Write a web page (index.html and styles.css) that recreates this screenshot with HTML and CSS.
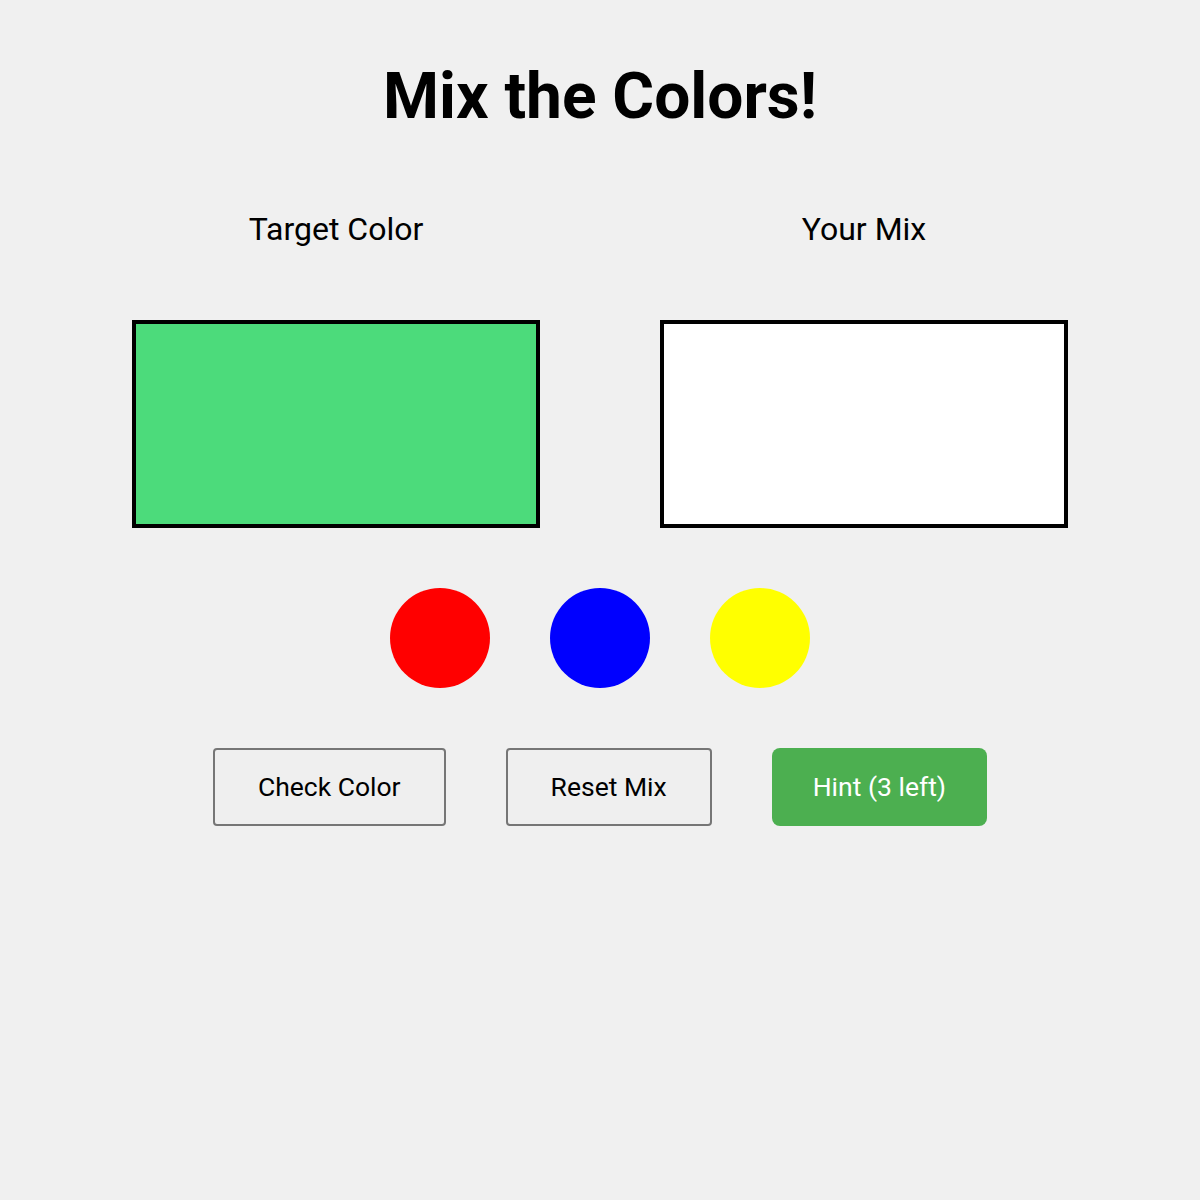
FILE: index.html
```html
<!DOCTYPE html>
<html lang="en">
<head>
    <meta charset="UTF-8">
    <meta name="viewport" content="width=device-width, initial-scale=1.0">
    <title>Mix the Colors!</title>
    <link rel="stylesheet" href="styles.css">
</head>
<body>
    <div class="game">
        <h1>Mix the Colors!</h1>

        <div class="swatches">
            <div class="swatch-col">
                <h2>Target Color</h2>
                <div class="swatch" id="target"></div>
            </div>
            <div class="swatch-col">
                <h2>Your Mix</h2>
                <div class="swatch mix" id="mix"></div>
            </div>
        </div>

        <div class="paints">
            <div class="paint red" data-color="red"></div>
            <div class="paint blue" data-color="blue"></div>
            <div class="paint yellow" data-color="yellow"></div>
        </div>

        <div class="controls">
            <button id="checkBtn">Check Color</button>
            <button id="resetBtn">Reset Mix</button>
            <button id="hintBtn" class="hint">Hint (3 left)</button>
        </div>
    </div>
</body>
</html>
```

FILE: styles.css
```css
:root {
    --page-bg: #f0f0f0;
    --target: #4cdb7b;
    --hint: #4caf50;
}

* {
    margin: 0;
    padding: 0;
    box-sizing: border-box;
}

body {
    background-color: var(--page-bg);
    font-family: 'Roboto', 'Liberation Sans', sans-serif;
    color: #000;
}

.game {
    display: flex;
    flex-direction: column;
    align-items: center;
    padding-top: 59px;
}

h1 {
    font-size: 64px;
    font-weight: bold;
    line-height: 75px;
}

.swatches {
    display: flex;
    gap: 120px;
    margin-top: 76px;
}

.swatch-col {
    display: flex;
    flex-direction: column;
    align-items: center;
}

h2 {
    font-size: 32px;
    font-weight: normal;
    line-height: 38px;
    margin-bottom: 72px;
}

.swatch {
    width: 408px;
    height: 208px;
    border: 4px solid #000;
    background-color: var(--target);
}

.swatch.mix {
    background-color: #fff;
}

.paints {
    display: flex;
    gap: 60px;
    margin-top: 60px;
}

.paint {
    width: 100px;
    height: 100px;
    border-radius: 50%;
    cursor: pointer;
}

.red { background-color: #f00; }
.blue { background-color: #00f; }
.yellow { background-color: #ff0; }

.controls {
    display: flex;
    gap: 60px;
    margin-top: 60px;
}

button {
    height: 78px;
    padding: 0 43px 1px;
    font-family: inherit;
    font-size: 26.5px;
    color: #000;
    background-color: #efefef;
    border: 2px solid #767676;
    border-radius: 4px;
    cursor: pointer;
}

button.hint {
    background-color: var(--hint);
    border: none;
    padding: 0 41px 1px;
    color: #fff;
    border-radius: 8px;
}
```
